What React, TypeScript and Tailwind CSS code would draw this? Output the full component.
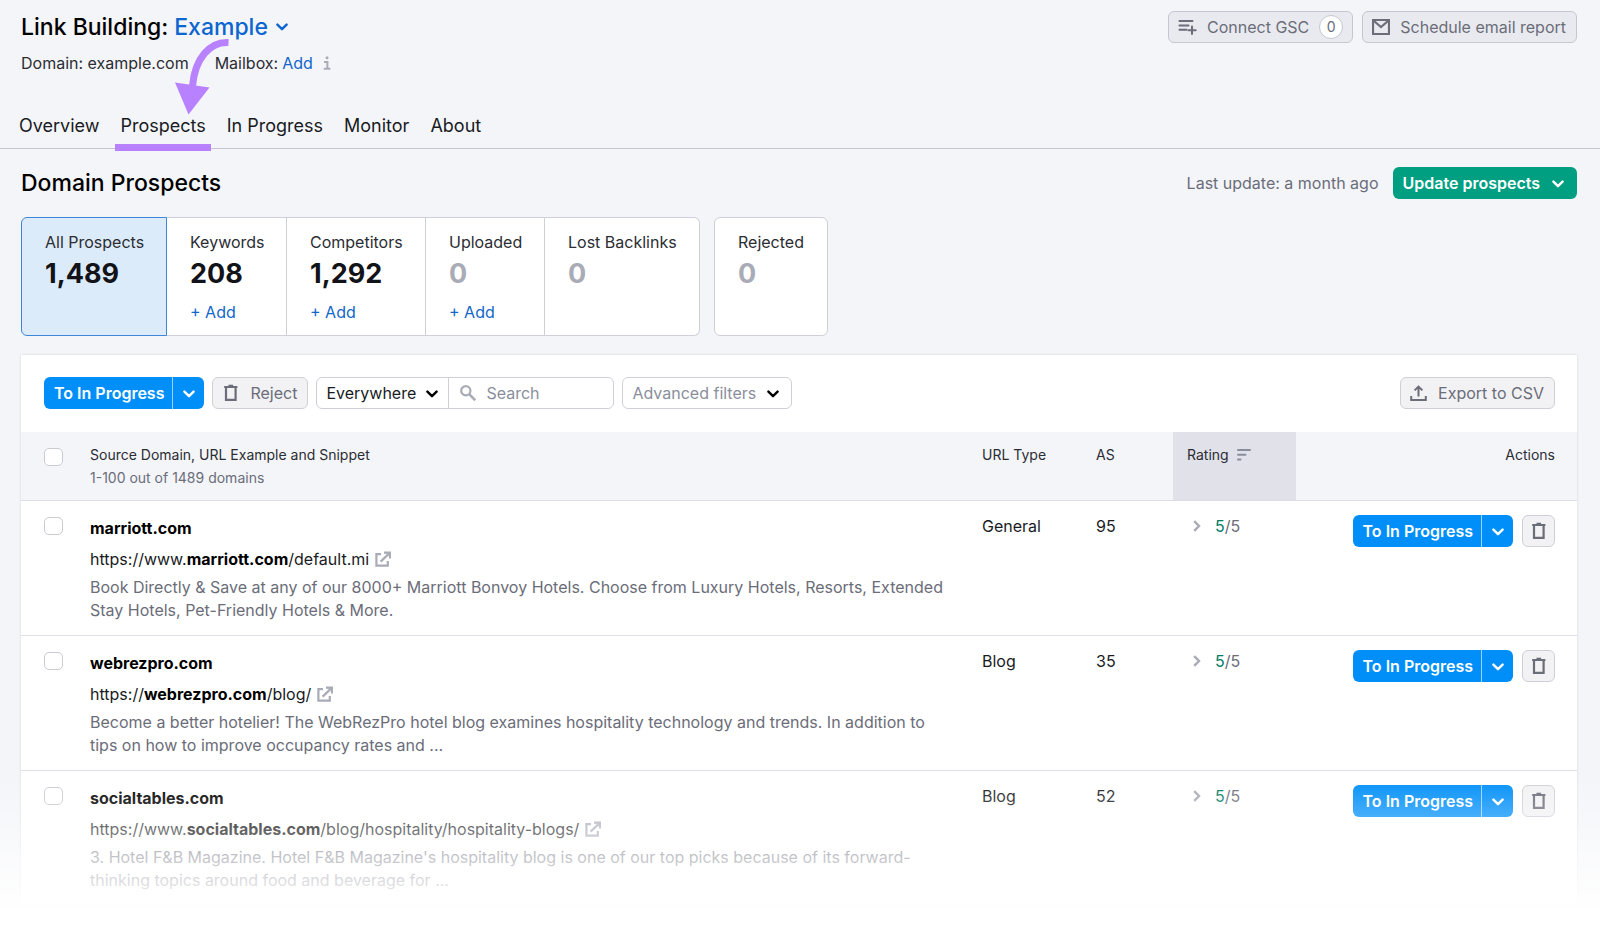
import { useState } from 'react';

const tabs = ["Overview", "Prospects", "In Progress", "Monitor", "About"];

const stats = [
  { label: "All Prospects", value: "1,489", canAdd: false, width: "w-[146px]" },
  { label: "Keywords", value: "208", canAdd: true, width: "w-[120px]" },
  { label: "Competitors", value: "1,292", canAdd: true, width: "w-[139px]" },
  { label: "Uploaded", value: "0", canAdd: true, width: "w-[119px]" },
  { label: "Lost Backlinks", value: "0", canAdd: false, width: "w-[155px]" },
];

const prospects = [
  {
    domain: "marriott.com",
    prefix: "https://www.",
    path: "/default.mi",
    snippet: "Book Directly & Save at any of our 8000+ Marriott Bonvoy Hotels. Choose from Luxury Hotels, Resorts, Extended Stay Hotels, Pet-Friendly Hotels & More.",
    type: "General",
    score: 95,
  },
  {
    domain: "webrezpro.com",
    prefix: "https://",
    path: "/blog/",
    snippet: "Become a better hotelier! The WebRezPro hotel blog examines hospitality technology and trends. In addition to tips on how to improve occupancy rates and ...",
    type: "Blog",
    score: 35,
  },
  {
    domain: "socialtables.com",
    prefix: "https://www.",
    path: "/blog/hospitality/hospitality-blogs/",
    snippet: "3. Hotel F&B Magazine. Hotel F&B Magazine's hospitality blog is one of our top picks because of its forward-thinking topics around food and beverage for ...",
    type: "Blog",
    score: 52,
  },
];

function Chevron({ className = "" }: { className?: string }) {
  return (
    <svg className={`w-3 h-2 ${className}`} viewBox="0 0 12 8" fill="none" stroke="currentColor" strokeWidth={2.4} strokeLinecap="round" strokeLinejoin="round">
      <path d="M1.4 1.6L6 6.2l4.6-4.6" />
    </svg>
  );
}

function TrashIcon() {
  return (
    <svg className="w-4 h-[18px]" viewBox="0 0 16 18" fill="none" stroke="currentColor">
      <path d="M1.2 3h13.200" strokeWidth={2} />
      <path d="M5.5 1.5h4.600" strokeWidth={1.6} />
      <path d="M3 3.5v12.300h9.600V3.5" strokeWidth={2.2} />
    </svg>
  );
}

function ExternalIcon() {
  return (
    <svg className="w-[17px] h-4 text-[#a9abb6]" viewBox="0 0 17 16" fill="none" stroke="currentColor" strokeWidth={2.2}>
      <path d="M6 3.200H1.400v11.400h11.400V10" />
      <path d="M5.600 10.600L14 2.600" />
      <path d="M9 0.500h7v7h-2l-0.300-4.500-4.700-0.300z" fill="currentColor" stroke="none" />
    </svg>
  );
}

function ProgressButton() {
  return (
    <div className="inline-flex h-8 rounded-md overflow-hidden bg-[#008ff8] text-white">
      <button className="pl-[10px] pr-2 text-base font-semibold whitespace-nowrap">To In Progress</button>
      <button aria-label="More options" className="w-8 flex items-center justify-center border-l border-white/60">
        <Chevron className="relative top-px" />
      </button>
    </div>
  );
}

function Checkbox({ label }: { label: string }) {
  return (
    <input
      type="checkbox"
      aria-label={label}
      className="block appearance-none w-[19px] h-[18px] rounded-[5px] border border-[#c9cbd3] bg-white checked:bg-[#008ff8]"
    />
  );
}

function StatCard({ label, value, canAdd, selected, className }: { label: string; value: string; canAdd: boolean; selected: boolean; className: string }) {
  return (
    <div className={`h-[119px] pl-[23px] pt-3 border ${selected ? 'relative bg-[#dcebfa] border-[#3d87d6]' : 'bg-white border-[#cfd0d7]'} ${className}`}>
      <p className="text-base leading-6 text-[#2b2d33] whitespace-nowrap">{label}</p>
      <p className={`text-[27px] leading-10 font-bold ${value === "0" ? 'text-[#a9abb6]' : 'text-[#111318]'}`}>{value}</p>
      {canAdd && <button className="mt-1.5 text-base leading-6 text-[#1267c9]">+ Add</button>}
    </div>
  );
}

function App() {
  const [activeTab, setActiveTab] = useState<string>("Prospects");
  const [scope, setScope] = useState<string>("Everywhere");
  const [search, setSearch] = useState<string>("");

  return (
    <div className="relative min-h-screen bg-[#f4f5f9] font-['Inter',sans-serif] text-[#191b23]">
      {/* Page header */}
      <header className="border-b border-[#c4c7cf]">
        <div className="flex items-start justify-between pl-[21px] pr-[23px] pt-[11px]">
          <div>
            <div className="flex items-center">
              <h1 className="text-[23px] leading-8 font-medium text-black">Link Building:</h1>
              <button className="ml-1.5 flex items-center gap-2 text-[23px] leading-8 font-medium text-[#0b66cf]">
                Example
                <Chevron />
              </button>
            </div>
            <div className="mt-2 flex items-center text-base leading-6 text-[#2b2d33]">
              <span>Domain: example.com</span>
              <span className="ml-[26px]">Mailbox:</span>
              <a href="#mailbox" className="ml-1 text-[#1267c9]">Add</a>
              <svg className="ml-2.5 w-2 h-[14px] text-[#a9abb6]" viewBox="0 0 8 14" fill="none" stroke="currentColor" strokeWidth={2}>
                <circle cx="4" cy="1.8" r="1.5" fill="currentColor" stroke="none" />
                <path d="M1 6h3.4v6.6M.8 12.8h6.6" />
              </svg>
            </div>
          </div>
          <div className="flex gap-[9px] text-base text-[#6b6d79]">
            <button className="h-8 flex items-center rounded-md border border-[#c4c7cf] bg-[#e9eaf0] px-[9px]">
              <svg className="w-[19px] h-4" viewBox="0 0 19 16" fill="none" stroke="currentColor" strokeWidth={2} strokeLinecap="round">
                <path d="M1.5 2h13M1.5 6.4h9M1.5 10.8h7M14 7.5v7.5M10.5 11.2h7.2" />
              </svg>
              <span className="ml-2.5">Connect GSC</span>
              <span className="ml-2.5 w-6 h-6 flex items-center justify-center rounded-full border border-[#c4c7cf] bg-white text-sm">0</span>
            </button>
            <button className="h-8 flex items-center rounded-md border border-[#c4c7cf] bg-[#e9eaf0] pl-[9px] pr-[10px]">
              <svg className="w-[18px] h-4" viewBox="0 0 18 16" fill="none" stroke="currentColor" strokeWidth={2.2}>
                <path d="M1 1h16v14H1z" />
                <path d="M2 2l7 6 7-6" />
              </svg>
              <span className="ml-2.5">Schedule email report</span>
            </button>
          </div>
        </div>
        <nav className="mt-[34px] flex gap-[9px] pl-[13px]">
          {tabs.map((tab) => (
            <button
              key={tab}
              onClick={() => setActiveTab(tab)}
              className="relative px-1.5 h-[39px] pb-1.5 text-lg leading-6 text-[#191b23]"
            >
              {tab}
              {activeTab === tab && <span className="absolute left-px right-px -bottom-[3px] h-[7px] bg-[#b881ff]" />}
            </button>
          ))}
        </nav>
      </header>

      {/* Arrow pointing at the Prospects tab */}
      <svg className="absolute left-[170px] top-[34px] w-[64px] h-[84px] pointer-events-none" viewBox="0 0 64 84" fill="none">
        <path d="M58.5 8.5C40 7.500 25 24 22.500 52" stroke="#b881ff" strokeWidth="7" />
        <path d="M5 48.500L39.500 53.500L18.500 80.500z" fill="#b881ff" />
      </svg>

      <main className="pl-[21px] pr-[23px] pt-[18px]">
        <div className="flex items-center justify-between">
          <h2 className="text-[23px] leading-8 font-medium text-black">Domain Prospects</h2>
          <div className="flex items-center gap-[14px]">
            <span className="text-base text-[#6b6d79]">Last update: a month ago</span>
            <button className="h-8 flex items-center gap-3 rounded-md bg-[#009f81] pl-[10px] pr-[13px] text-base font-semibold text-white">
              Update prospects
              <Chevron className="relative top-px" />
            </button>
          </div>
        </div>

        {/* Summary cards */}
        <div className="mt-[18px] flex gap-[14px]">
          <div className="flex">
            {stats.map((stat, i) => (
              <StatCard
                key={stat.label}
                label={stat.label}
                value={stat.value}
                canAdd={stat.canAdd}
                selected={i === 0}
                className={`${stat.width} ${i === 0 ? 'rounded-l-md' : 'border-l-0'} ${i === stats.length - 1 ? 'rounded-r-md' : ''}`}
              />
            ))}
          </div>
          <StatCard label="Rejected" value="0" canAdd={false} selected={false} className="w-[114px] rounded-md" />
        </div>

        <section className="mt-[19px] bg-white shadow-[0_0_2px_rgba(25,27,35,0.16)] pb-[18px]">
          {/* Toolbar */}
          <div className="flex items-center justify-between pl-[23px] pr-[22px] pt-[22px] pb-[23px]">
            <div className="flex items-center gap-2">
              <ProgressButton />
              <button className="h-8 flex items-center gap-[11px] rounded-md border border-[#cfd0d7] bg-[#f2f2f5] pl-[10px] pr-[10px] text-base text-[#6b6d79]">
                <TrashIcon />
                Reject
              </button>
              <div className="flex h-8 rounded-md border border-[#cfd0d7]">
                <label className="relative flex items-center border-r border-[#cfd0d7]">
                  <select
                    aria-label="Search scope"
                    value={scope}
                    onChange={(e) => setScope(e.target.value)}
                    className="appearance-none w-[131px] h-full pl-[9px] text-base text-[#191b23] bg-transparent"
                  >
                    <option>Everywhere</option>
                    <option>Domain</option>
                  </select>
                  <Chevron className="absolute right-2.5 top-3 pointer-events-none text-black" />
                </label>
                <label className="flex items-center w-[164px] pl-[11px] gap-2.5">
                  <svg className="w-4 h-4 shrink-0 text-[#a9abb6]" viewBox="0 0 16 16" fill="none" stroke="currentColor" strokeWidth={2.2}>
                    <circle cx="5.8" cy="5.8" r="4.6" />
                    <path d="M9.200 9.200l6 6" strokeWidth={2.6} />
                  </svg>
                  <input
                    aria-label="Search"
                    placeholder="Search"
                    value={search}
                    onChange={(e) => setSearch(e.target.value)}
                    className="w-full min-w-0 h-full text-base outline-none placeholder:text-[#8a8e9b]"
                  />
                </label>
              </div>
              <button className="h-8 flex items-center gap-[11px] rounded-md border border-[#cfd0d7] bg-white pl-[9px] pr-3 text-base text-[#8a8e9b]">
                Advanced filters
                <Chevron className="relative top-px text-black" />
              </button>
            </div>
            <button className="h-8 flex items-center gap-[11px] rounded-md border border-[#cfd0d7] bg-[#f2f2f5] pl-[9px] pr-[10px] text-base text-[#6b6d79]">
              <svg className="w-[17px] h-4" viewBox="0 0 17 16" fill="none" stroke="currentColor" strokeWidth={2}>
                <path d="M1.200 11v4h14.600v-4M8.500 11.500V2M4.600 5.400L8.500 1.600l3.900 3.800" />
              </svg>
              Export to CSV
            </button>
          </div>

          <table className="w-full table-fixed text-left">
            <colgroup>
              <col className="w-[69px]" />
              <col />
              <col className="w-[114px]" />
              <col className="w-[77px]" />
              <col className="w-[123px]" />
              <col className="w-[281px]" />
            </colgroup>
            <thead>
              <tr className="h-[68px] align-top bg-[#f4f5f9] border-b border-[#dcdee6] text-sm leading-[23px] text-[#2b2d33]">
                <th className="pl-[23px] pt-4"><Checkbox label="Select all" /></th>
                <th className="pt-[11px] font-normal">
                  Source Domain, URL Example and Snippet
                  <span className="block text-[#6b6d79]">1-100 out of 1489 domains</span>
                </th>
                <th className="pt-[11px] font-normal">URL Type</th>
                <th className="pt-[11px] font-normal">AS</th>
                <th className="pt-[11px] pl-[14px] font-normal bg-[#e0e1e9]">
                  <div className="flex items-center gap-2">
                    Rating
                    <svg className="w-[14px] h-3 text-[#8a8e9b]" viewBox="0 0 14 12" fill="none" stroke="currentColor" strokeWidth={2} strokeLinecap="round">
                      <path d="M1 1h12M1 5.800h7.500M1 10.600h2.500" />
                    </svg>
                  </div>
                </th>
                <th className="pt-[11px] pr-[22px] font-normal text-right">Actions</th>
              </tr>
            </thead>
            <tbody>
              {prospects.map((row) => (
                <tr key={row.domain} className="align-top border-b border-[#e0e1e9] text-base leading-[23px]">
                  <td className="pl-[23px] pt-4"><Checkbox label={`Select ${row.domain}`} /></td>
                  <td className="pt-[15px] pr-8 pb-[13px]">
                    <p className="leading-6 font-bold text-black">{row.domain}</p>
                    <a href={`${row.prefix}${row.domain}${row.path}`} className="mt-[7px] mb-[5px] flex items-center leading-6">
                      <span>{row.prefix}<b className="font-bold text-black">{row.domain}</b>{row.path}</span>
                      <span className="ml-1.5"><ExternalIcon /></span>
                    </a>
                    <p className="text-[#6b6d79]">{row.snippet}</p>
                  </td>
                  <td className="pt-[14px]">{row.type}</td>
                  <td className="pt-[14px]">{row.score}</td>
                  <td className="pt-[14px] pl-5">
                    <div className="flex items-center">
                      <svg className="w-2 h-3 text-[#a9abb6]" viewBox="0 0 8 12" fill="none" stroke="currentColor" strokeWidth={2.400}>
                        <path d="M1.200 1.200L6 6l-4.800 4.800" />
                      </svg>
                      <span className="ml-[14px] text-[#6b6d79]"><span className="text-[#007c65]">5</span>/5</span>
                    </div>
                  </td>
                  <td className="pt-[14px] pr-[22px]">
                    <div className="flex justify-end gap-[9px]">
                      <ProgressButton />
                      <button aria-label={`Reject ${row.domain}`} className="w-[33px] h-8 flex items-center justify-center rounded-md border border-[#cfd0d7] bg-[#f2f2f5] text-[#6b6d79]">
                        <TrashIcon />
                      </button>
                    </div>
                  </td>
                </tr>
              ))}
            </tbody>
          </table>
        </section>
      </main>

      {/* Fade out towards the end of the list */}
      <div className="absolute inset-x-0 bottom-0 h-[150px] pointer-events-none bg-[linear-gradient(to_bottom,rgba(255,255,255,0),rgba(255,255,255,0.28)_28%,rgba(255,255,255,0.6)_55%,rgba(255,255,255,0.75)_70%,#fff_92%)]" />
    </div>
  );
}

export default App;
